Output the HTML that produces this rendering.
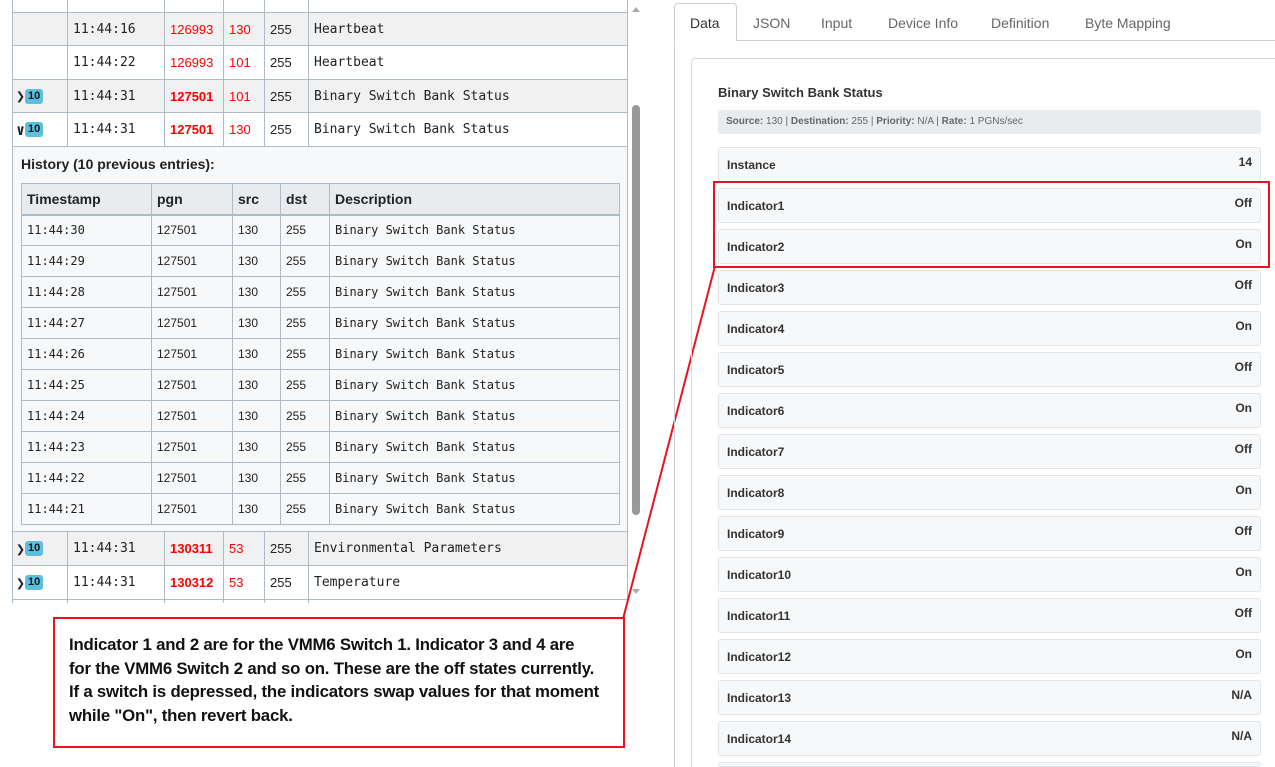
<!DOCTYPE html>
<html style="overflow:hidden;height:767px"><head><meta charset="utf-8"><style>
*{box-sizing:border-box;margin:0;padding:0}
body{width:1275px;height:767px;background:#fff;position:relative;overflow:hidden;font-family:"Liberation Sans",sans-serif;color:#222}
.a{position:absolute}
.mono{font-family:"DejaVu Sans Mono","Liberation Mono",monospace}
table{border-collapse:collapse;position:absolute}
td{border:1px solid #aebbc6;font-size:13px;padding:0 5px;white-space:nowrap}
.r{color:#f00}.rb{color:#f00;font-weight:bold}
.badge{display:inline-block;background:#5bc0de;color:#111;font-size:11px;font-weight:bold;border-radius:3px;padding:2px 3px;vertical-align:middle;font-family:"Liberation Sans",sans-serif;line-height:11px}
.chev{font-weight:bold;font-size:15px;vertical-align:middle}
.it{position:absolute;left:718px;width:543px;height:35px;background:#f7f8f9;border:1px solid #e2e5e8;border-radius:3px;font-size:12px;font-weight:bold;color:#333}
.it span{position:absolute;left:8px;top:10px}
.it b{position:absolute;right:8px;top:7px}
.tab{position:absolute;top:15px;font-size:14px;color:#666}
</style></head><body>
<div class="a" style="left:12px;top:0;width:616px;height:603px;overflow:hidden">
<table class="mono" style="left:0;top:-21px;width:616px">
<colgroup><col style="width:55px"><col style="width:97px"><col style="width:59px"><col style="width:41px"><col style="width:44px"><col></colgroup>
<tr style="height:33px"><td></td><td></td><td></td><td></td><td></td><td></td></tr>
<tr style="height:33px;background:#f1f1f1"><td></td><td>11:44:16</td><td class="r" style="font-family:'Liberation Sans'">126993</td><td class="r" style="font-family:'Liberation Sans'">130</td><td style="font-family:'Liberation Sans'">255</td><td>Heartbeat</td></tr>
<tr style="height:34px"><td></td><td>11:44:22</td><td class="r" style="font-family:'Liberation Sans'">126993</td><td class="r" style="font-family:'Liberation Sans'">101</td><td style="font-family:'Liberation Sans'">255</td><td>Heartbeat</td></tr>
<tr style="height:33px;background:#f1f1f1"><td style="padding:0 3px"><span class="chev">&#x276F;</span><span class="badge">10</span></td><td>11:44:31</td><td class="rb" style="font-family:'Liberation Sans'">127501</td><td class="r" style="font-family:'Liberation Sans'">101</td><td style="font-family:'Liberation Sans'">255</td><td>Binary Switch Bank Status</td></tr>
<tr style="height:34px"><td style="padding:0 3px"><span class="chev">&#x2228;</span><span class="badge">10</span></td><td>11:44:31</td><td class="rb" style="font-family:'Liberation Sans'">127501</td><td class="r" style="font-family:'Liberation Sans'">130</td><td style="font-family:'Liberation Sans'">255</td><td>Binary Switch Bank Status</td></tr>
<tr style="height:385px;background:#f7f8f9"><td colspan="6"></td></tr>
<tr style="height:34px;background:#f1f1f1"><td style="padding:0 3px"><span class="chev">&#x276F;</span><span class="badge">10</span></td><td>11:44:31</td><td class="rb" style="font-family:'Liberation Sans'">130311</td><td class="r" style="font-family:'Liberation Sans'">53</td><td style="font-family:'Liberation Sans'">255</td><td>Environmental Parameters</td></tr>
<tr style="height:34px"><td style="padding:0 3px"><span class="chev">&#x276F;</span><span class="badge">10</span></td><td>11:44:31</td><td class="rb" style="font-family:'Liberation Sans'">130312</td><td class="r" style="font-family:'Liberation Sans'">53</td><td style="font-family:'Liberation Sans'">255</td><td>Temperature</td></tr>
<tr style="height:34px"><td></td><td></td><td></td><td></td><td></td><td></td></tr>
</table>
</div>
<div class="a" style="left:21px;top:156px;font-size:14px;font-weight:bold">History (10 previous entries):</div>
<table style="left:21px;top:183px;width:599px;background:#f7f8f9">
<colgroup><col style="width:130px"><col style="width:81px"><col style="width:48px"><col style="width:49px"><col></colgroup>
<tr style="height:31px;background:#e9ecef"><td style="font-weight:bold;font-size:14px;border-bottom:2px solid #aebbc6">Timestamp</td><td style="font-weight:bold;font-size:14px;border-bottom:2px solid #aebbc6">pgn</td><td style="font-weight:bold;font-size:14px;border-bottom:2px solid #aebbc6">src</td><td style="font-weight:bold;font-size:14px;border-bottom:2px solid #aebbc6">dst</td><td style="font-weight:bold;font-size:14px;border-bottom:2px solid #aebbc6">Description</td></tr>
<tr style="height:31px"><td class="mono" style="font-size:12px">11:44:30</td><td style="font-size:12px">127501</td><td style="font-size:12px">130</td><td style="font-size:12px">255</td><td class="mono" style="font-size:12px">Binary Switch Bank Status</td></tr>
<tr style="height:31px"><td class="mono" style="font-size:12px">11:44:29</td><td style="font-size:12px">127501</td><td style="font-size:12px">130</td><td style="font-size:12px">255</td><td class="mono" style="font-size:12px">Binary Switch Bank Status</td></tr>
<tr style="height:31px"><td class="mono" style="font-size:12px">11:44:28</td><td style="font-size:12px">127501</td><td style="font-size:12px">130</td><td style="font-size:12px">255</td><td class="mono" style="font-size:12px">Binary Switch Bank Status</td></tr>
<tr style="height:31px"><td class="mono" style="font-size:12px">11:44:27</td><td style="font-size:12px">127501</td><td style="font-size:12px">130</td><td style="font-size:12px">255</td><td class="mono" style="font-size:12px">Binary Switch Bank Status</td></tr>
<tr style="height:31px"><td class="mono" style="font-size:12px">11:44:26</td><td style="font-size:12px">127501</td><td style="font-size:12px">130</td><td style="font-size:12px">255</td><td class="mono" style="font-size:12px">Binary Switch Bank Status</td></tr>
<tr style="height:31px"><td class="mono" style="font-size:12px">11:44:25</td><td style="font-size:12px">127501</td><td style="font-size:12px">130</td><td style="font-size:12px">255</td><td class="mono" style="font-size:12px">Binary Switch Bank Status</td></tr>
<tr style="height:31px"><td class="mono" style="font-size:12px">11:44:24</td><td style="font-size:12px">127501</td><td style="font-size:12px">130</td><td style="font-size:12px">255</td><td class="mono" style="font-size:12px">Binary Switch Bank Status</td></tr>
<tr style="height:31px"><td class="mono" style="font-size:12px">11:44:23</td><td style="font-size:12px">127501</td><td style="font-size:12px">130</td><td style="font-size:12px">255</td><td class="mono" style="font-size:12px">Binary Switch Bank Status</td></tr>
<tr style="height:31px"><td class="mono" style="font-size:12px">11:44:22</td><td style="font-size:12px">127501</td><td style="font-size:12px">130</td><td style="font-size:12px">255</td><td class="mono" style="font-size:12px">Binary Switch Bank Status</td></tr>
<tr style="height:31px"><td class="mono" style="font-size:12px">11:44:21</td><td style="font-size:12px">127501</td><td style="font-size:12px">130</td><td style="font-size:12px">255</td><td class="mono" style="font-size:12px">Binary Switch Bank Status</td></tr>
</table>
<div class="a" style="left:628px;top:0;width:13px;height:603px;background:#fff"></div>
<div class="a" style="left:632px;top:105px;width:8px;height:410px;background:#999;border-radius:4px"></div>
<div class="a" style="left:632px;top:7px;width:0;height:0;border-left:4px solid transparent;border-right:4px solid transparent;border-bottom:5px solid #aaa"></div>
<div class="a" style="left:632px;top:589px;width:0;height:0;border-left:4px solid transparent;border-right:4px solid transparent;border-top:5px solid #aaa"></div>
<div class="a" style="left:53px;top:617px;width:572px;height:131px;border:2px solid #e8131f;padding:14px 0 0 14px;font-size:16.8px;font-weight:bold;line-height:23.5px;letter-spacing:-0.2px;color:#111;white-space:nowrap">Indicator 1 and 2 are for the VMM6 Switch 1. Indicator 3 and 4 are<br>for the VMM6 Switch 2 and so on. These are the off states currently.<br>If a switch is depressed, the indicators swap values for that moment<br>while "On", then revert back.</div>
<svg class="a" style="left:0;top:0" width="1275" height="767"><line x1="623" y1="619" x2="715" y2="266" stroke="#e8131f" stroke-width="2"/></svg>
<div class="a" style="left:674px;top:40px;width:601px;height:727px;border-left:1px solid #c8ced3;border-top:1px solid #c8ced3"></div>
<div class="a" style="left:674px;top:3px;width:63px;height:38px;border:1px solid #c8ced3;border-bottom:1px solid #fff;border-radius:4px 4px 0 0;background:#fff"></div>
<div class="tab" style="left:690px;color:#333">Data</div>
<div class="tab" style="left:753px">JSON</div>
<div class="tab" style="left:821px">Input</div>
<div class="tab" style="left:888px">Device Info</div>
<div class="tab" style="left:991px">Definition</div>
<div class="tab" style="left:1085px">Byte Mapping</div>
<div class="a" style="left:691px;top:58px;width:600px;height:720px;border:1px solid #d5d9dd;border-radius:4px"></div>
<div class="a" style="left:718px;top:85px;font-size:13px;font-weight:bold;color:#333">Binary Switch Bank Status</div>
<div class="a" style="left:718px;top:110px;width:543px;height:24px;background:#e9ecef;border-radius:3px;font-size:10px;color:#666;padding:6px 0 0 8px"><b>Source:</b> 130 | <b>Destination:</b> 255 | <b>Priority:</b> N/A | <b>Rate:</b> 1 PGNs/sec</div>
<div class="it" style="top:147px"><span>Instance</span><b>14</b></div>
<div class="it" style="top:188px"><span>Indicator1</span><b>Off</b></div>
<div class="it" style="top:229px"><span>Indicator2</span><b>On</b></div>
<div class="it" style="top:270px"><span>Indicator3</span><b>Off</b></div>
<div class="it" style="top:311px"><span>Indicator4</span><b>On</b></div>
<div class="it" style="top:352px"><span>Indicator5</span><b>Off</b></div>
<div class="it" style="top:393px"><span>Indicator6</span><b>On</b></div>
<div class="it" style="top:434px"><span>Indicator7</span><b>Off</b></div>
<div class="it" style="top:475px"><span>Indicator8</span><b>On</b></div>
<div class="it" style="top:516px"><span>Indicator9</span><b>Off</b></div>
<div class="it" style="top:557px"><span>Indicator10</span><b>On</b></div>
<div class="it" style="top:598px"><span>Indicator11</span><b>Off</b></div>
<div class="it" style="top:639px"><span>Indicator12</span><b>On</b></div>
<div class="it" style="top:680px"><span>Indicator13</span><b>N/A</b></div>
<div class="it" style="top:721px"><span>Indicator14</span><b>N/A</b></div>
<div class="it" style="top:762px;height:5px"></div>
<div class="a" style="left:713px;top:181px;width:557px;height:87px;border:2px solid #e8131f"></div>
</body></html>
